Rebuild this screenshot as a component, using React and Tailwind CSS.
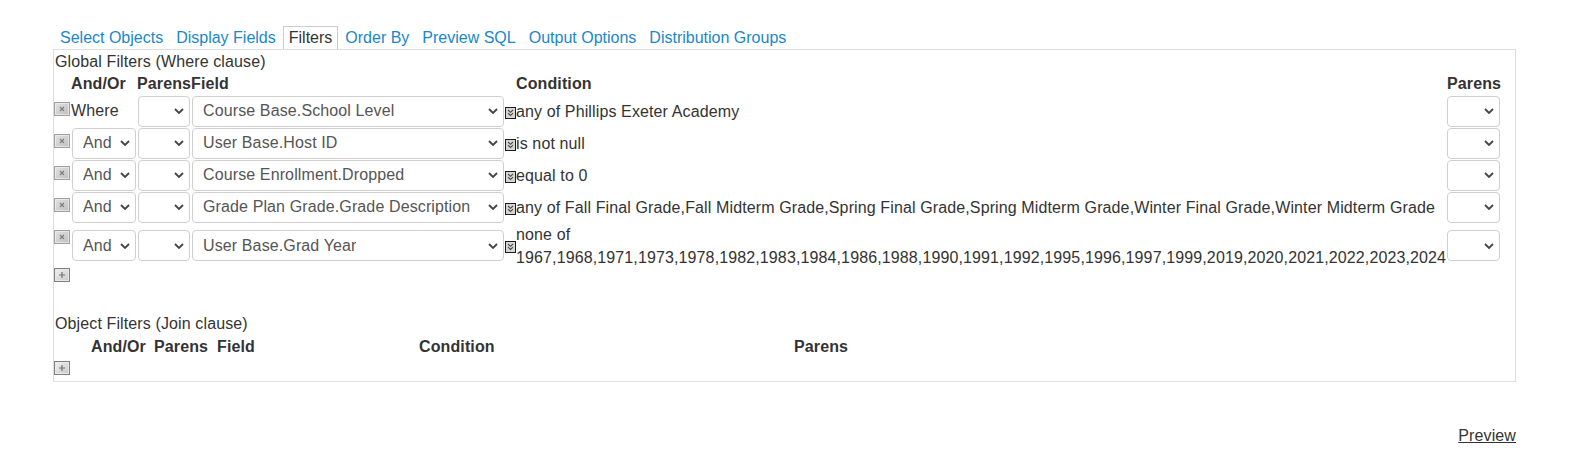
import React from 'react';

const tabs = [
  'Select Objects',
  'Display Fields',
  'Filters',
  'Order By',
  'Preview SQL',
  'Output Options',
  'Distribution Groups',
];

const years =
  '1967,1968,1971,1973,1978,1982,1983,1984,1986,1988,1990,1991,1992,1995,1996,1997,1999,2019,2020,2021,2022,2023,2024';

const rows = [
  { lead: 'Where', field: 'Course Base.School Level', cond: 'any of Phillips Exeter Academy' },
  { lead: 'And', field: 'User Base.Host ID', cond: 'is not null' },
  { lead: 'And', field: 'Course Enrollment.Dropped', cond: 'equal to 0' },
  {
    lead: 'And',
    field: 'Grade Plan Grade.Grade Description',
    cond: 'any of Fall Final Grade,Fall Midterm Grade,Spring Final Grade,Spring Midterm Grade,Winter Final Grade,Winter Midterm Grade',
  },
  { lead: 'And', field: 'User Base.Grad Year', cond: 'none of ' + years, tall: true },
];

const Chevron = () => (
  <svg width="10" height="6" viewBox="0 0 10 6" className="shrink-0">
    <polyline points="1,1 5,5 9,1" fill="none" stroke="#444" strokeWidth="1.8" />
  </svg>
);

const Select = ({ className, text }) => (
  <div
    className={`flex h-[31px] shrink-0 items-center justify-between rounded-[4px] border border-[#cfcfcf] bg-white pl-[10px] pr-[5px] text-[#555] ${className}`}
  >
    <span className="truncate">{text}</span>
    <Chevron />
  </div>
);

const RemoveIcon = () => (
  <svg width="16" height="14" viewBox="0 0 16 14" className="shrink-0">
    <defs>
      <linearGradient id="rm" x1="0" y1="0" x2="1" y2="1">
        <stop offset="0" stopColor="#e4e4e4" />
        <stop offset="1" stopColor="#bcbcbc" />
      </linearGradient>
    </defs>
    <rect x="0.5" y="0.5" width="15" height="13" fill="url(#rm)" stroke="#a0a0a0" />
    <rect x="1.5" y="1.5" width="13" height="11" fill="none" stroke="#efefef" strokeOpacity="0.7" />
    <path d="M6 5 L10 9 M10 5 L6 9" stroke="#7e7e7e" strokeWidth="1.2" />
  </svg>
);

const AddIcon = () => (
  <svg width="16" height="14" viewBox="0 0 16 14" className="shrink-0">
    <defs>
      <linearGradient id="ad" x1="0" y1="0" x2="1" y2="1">
        <stop offset="0" stopColor="#f4f4f4" />
        <stop offset="1" stopColor="#c6c6c6" />
      </linearGradient>
    </defs>
    <rect x="0.5" y="0.5" width="15" height="13" fill="url(#ad)" stroke="#808080" />
    <rect x="1.5" y="1.5" width="13" height="11" fill="none" stroke="#e8e8e8" />
    <path d="M8 4 V10 M5 7 H11" stroke="#707070" strokeWidth="1.2" />
  </svg>
);

const CondIcon = () => (
  <svg width="11" height="12" viewBox="0 0 11 12" className="mt-[3px] shrink-0">
    <rect x="0.5" y="0.5" width="10" height="11" fill="#d6d6d6" stroke="#1c1c1c" />
    <path d="M3 3 L5.5 5.3 L8 3 M3 6.2 L5.5 8.5 L8 6.2" fill="none" stroke="#4a4a4a" strokeWidth="1.1" />
  </svg>
);

export default function App() {
  return (
    <div className="h-[453px] w-[1575px] bg-white pt-[26px] font-['Liberation_Sans',Arial,sans-serif] text-[16px] tracking-[0.12px] text-[#333]">
      {/* tab strip */}
      <div className="flex h-[23px] pl-[54px] tracking-normal">
        {tabs.map((t) => (
          <div
            key={t}
            className={`mr-[1px] border px-[5px] leading-[21px] ${
              t === 'Filters'
                ? 'border-[#cccccc] border-b-0 text-[#333]'
                : 'border-transparent text-[#1a87cc]'
            }`}
          >
            {t}
          </div>
        ))}
      </div>

      <div className="ml-[53px] w-[1463px] border border-[#dddddd] pb-[6px]">
        <div className="h-[23px] pl-[1px] leading-[23px]">Global Filters (Where clause)</div>

        <div className="flex h-[22px] pl-[17px] font-bold leading-[22px]">
          <div className="w-[66px]">And/Or</div>
          <div className="w-[54px]">Parens</div>
          <div className="w-[325px]">Field</div>
          <div className="w-[931px]">Condition</div>
          <div>Parens</div>
        </div>

        {rows.map((r, i) => (
          <div key={i} className={`flex items-center ${r.tall ? 'h-[45px]' : 'h-[32px]'}`}>
            <div className="flex w-[18px] self-start pt-[7px]">
              <RemoveIcon />
            </div>
            <div className="w-[66px]">
              {r.lead === 'Where' ? (
                <span className="-ml-[1px]">Where</span>
              ) : (
                <Select className="w-[64px]" text="And" />
              )}
            </div>
            <Select className="w-[52px]" text="" />
            <Select className="ml-[2px] w-[312px]" text={r.field} />
            <div className="ml-[1px] flex w-[11px]">
              <CondIcon />
            </div>
            <div className="w-[931px] leading-[23px]">{r.cond}</div>
            <Select className="w-[53px]" text="" />
          </div>
        ))}

        <div className="h-[44px]">
          <AddIcon />
        </div>

        <div className="h-[23px] pl-[1px] leading-[23px]">Object Filters (Join clause)</div>
        <div className="flex h-[24px] pl-[37px] font-bold leading-[23px]">
          <div className="w-[63px]">And/Or</div>
          <div className="w-[63px]">Parens</div>
          <div className="w-[202px]">Field</div>
          <div className="w-[375px]">Condition</div>
          <div>Parens</div>
        </div>
        <div className="pt-[2px]">
          <AddIcon />
        </div>
      </div>

      <div className="ml-[53px] mt-[42px] flex w-[1463px] justify-end leading-[23px]">
        <a className="underline">Preview</a>
      </div>
    </div>
  );
}
